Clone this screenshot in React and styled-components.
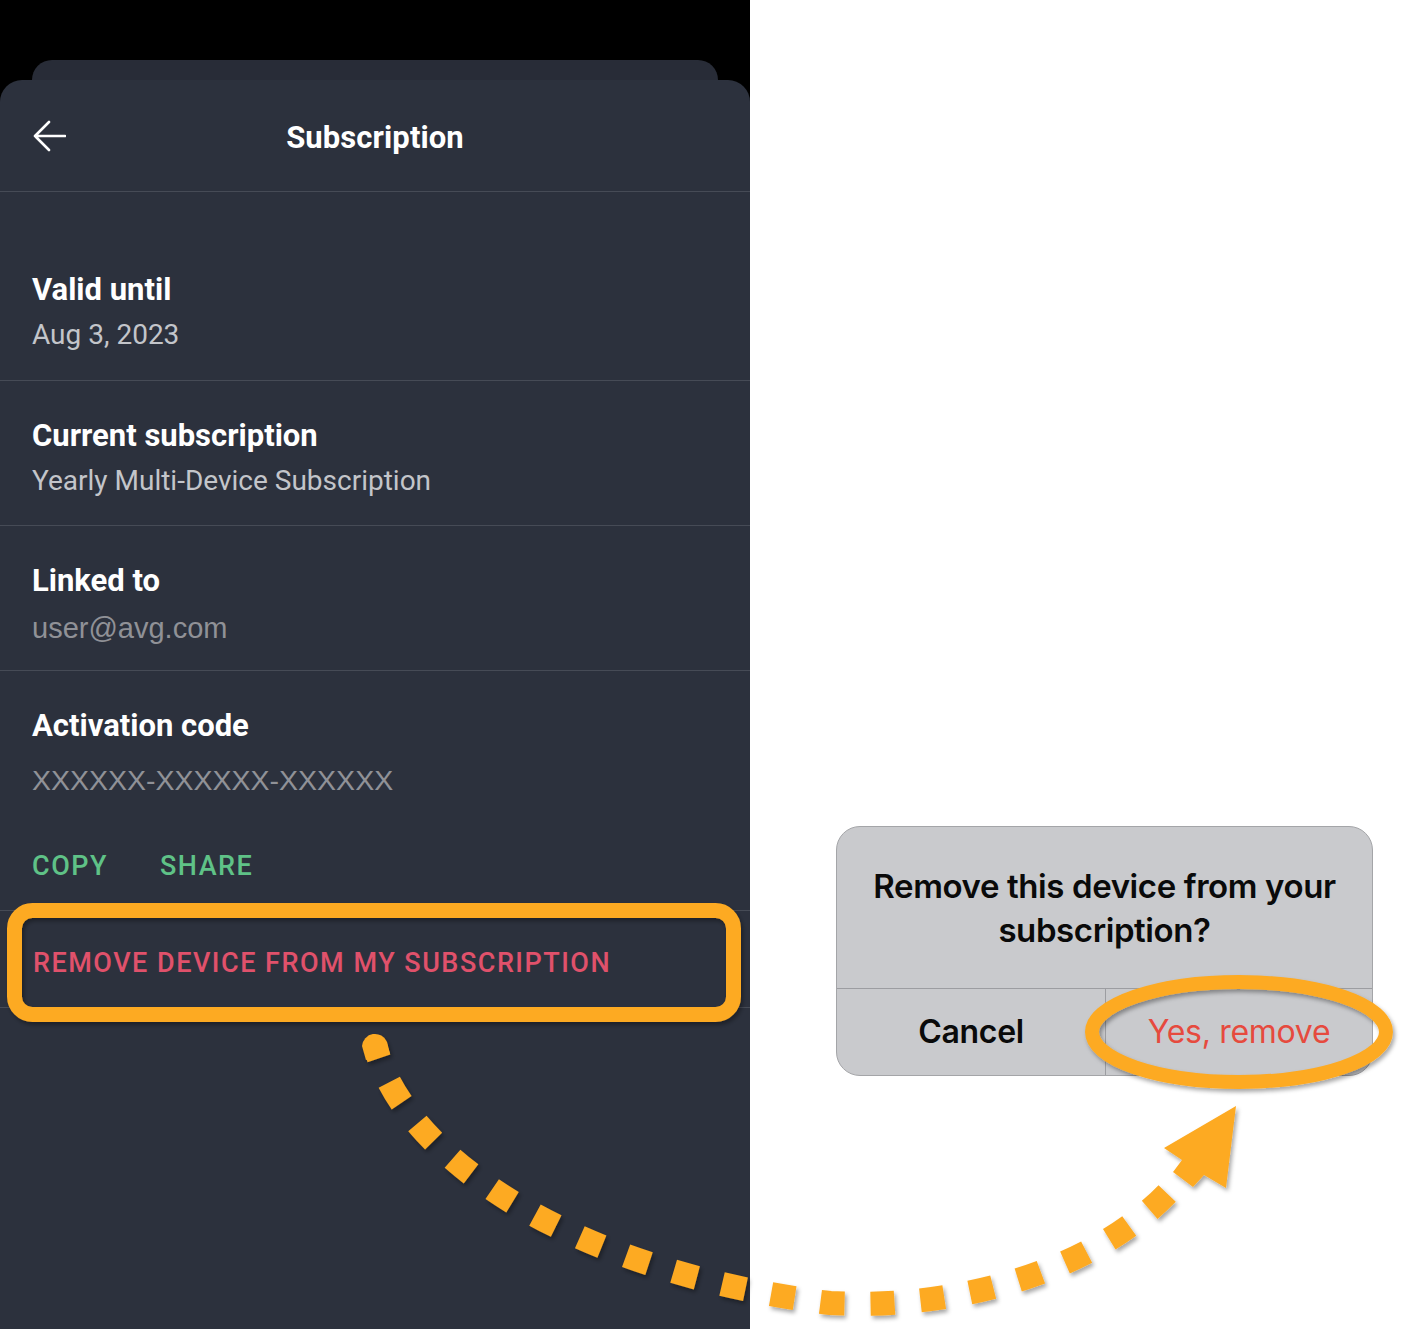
import React from "react";
import styled, { createGlobalStyle } from "styled-components";

const GlobalStyle = createGlobalStyle`
  html, body {
    margin: 0;
    padding: 0;
    background: #ffffff;
  }
  * {
    box-sizing: border-box;
  }
`;

const Page = styled.div`
  position: relative;
  width: 1403px;
  height: 1329px;
  display: flex;
  overflow: hidden;
  background: #ffffff;
  font-family: Roboto, "Noto Sans", sans-serif;
`;

const Phone = styled.div`
  width: 750px;
  display: flex;
  flex-direction: column;
  background: #000000;
  padding-top: 60px;
`;

const BackCard = styled.div`
  height: 20px;
  margin: 0 32px;
  background: #282c37;
  border-radius: 22px 22px 0 0;
`;

const Panel = styled.div`
  flex: 1;
  background: #2c313d;
  border-radius: 22px 22px 0 0;
  display: flex;
  flex-direction: column;
`;

const Header = styled.div`
  height: 112px;
  display: grid;
  grid-template-columns: 100px 1fr 100px;
  align-items: center;
  padding-left: 32px;
  border-bottom: 1px solid #464b56;
`;

const Title = styled.h1`
  margin: 0;
  text-align: center;
  color: #ffffff;
  font-size: 31px;
  font-weight: 700;
  padding-right: 32px;
  padding-top: 3px;
  letter-spacing: 0.1px;
`;

const Section = styled.div`
  padding: ${({ $top }) => $top || 37}px 32px ${({ $bottom }) => $bottom || 26}px;
  border-bottom: 1px solid #464b56;
  display: flex;
  flex-direction: column;
`;

const Label = styled.div`
  color: #ffffff;
  font-size: 31px;
  font-weight: 700;
  line-height: 36px;
`;

const Value = styled.div`
  margin-top: ${({ $gap }) => $gap || 9}px;
  color: ${({ $muted }) => ($muted ? "#909197" : "#c3c5ca")};
  font-family: ${({ $arial }) =>
    $arial ? '"Liberation Sans", Arial, sans-serif' : 'Roboto, sans-serif'};
  font-size: ${({ $size }) => $size || 28}px;
  line-height: 36px;
`;

const Actions = styled.div`
  margin-top: 50px;
  display: flex;
  gap: 52px;
`;

const ActionLink = styled.span`
  color: ${({ $danger }) => ($danger ? "#e0516b" : "#5fc287")};
  font-size: 27px;
  font-weight: 500;
  letter-spacing: 1.5px;
  line-height: 36px;
`;

const RemoveRow = styled.div`
  height: 97px;
  padding: 8px 33px 0;
  display: flex;
  align-items: center;
  border-bottom: 1px solid #464b56;
`;

const Side = styled.div`
  flex: 1;
  padding: 826px 0 0 86px;
`;

const Dialog = styled.div`
  width: 537px;
  height: 250px;
  background: #c9cacd;
  border: 1px solid #a4a5a8;
  border-radius: 24px;
  display: flex;
  flex-direction: column;
  overflow: hidden;
  font-family: Inter, "Noto Sans", sans-serif;
`;

const DialogText = styled.div`
  height: 162px;
  padding-top: 37px;
  text-align: center;
  color: #0a0a0a;
  font-size: 33px;
  font-weight: 600;
  line-height: 44px;
  letter-spacing: -0.4px;
  border-bottom: 1px solid #9c9da1;
`;

const DialogButtons = styled.div`
  flex: 1;
  display: grid;
  grid-template-columns: 268px 1fr;
`;

const DialogButton = styled.div`
  display: flex;
  align-items: center;
  justify-content: center;
  font-size: 32px;
  font-weight: ${({ $primary }) => ($primary ? 600 : 400)};
  color: ${({ $danger }) => ($danger ? "#e64a3e" : "#0a0a0a")};
  border-left: ${({ $divided }) => ($divided ? "1px solid #9c9da1" : "none")};
  letter-spacing: -0.3px;
  padding-bottom: 2px;
`;

const Overlay = styled.svg`
  position: absolute;
  left: 0;
  top: 0;
  pointer-events: none;
`;

const BackArrow = () => (
  <svg width="34" height="34" viewBox="0 0 34 34" fill="none">
    <path
      d="M33 17H3M17 3L3 17l14 14"
      stroke="#ffffff"
      strokeWidth="2.6"
      strokeLinecap="round"
      strokeLinejoin="round"
    />
  </svg>
);

const ORANGE = "#fdaa24";

const Annotations = () => (
  <Overlay width="1403" height="1329" viewBox="0 0 1403 1329">
    <defs>
      <filter id="shade" x="-10%" y="-10%" width="120%" height="120%">
        <feDropShadow dx="2" dy="3" stdDeviation="2.2" floodColor="#000" floodOpacity="0.35" />
      </filter>
    </defs>
    <g filter="url(#shade)">
      <rect x="14.5" y="910.5" width="719" height="104" rx="18" fill="none" stroke={ORANGE} strokeWidth="15" />
      <ellipse cx="1239" cy="1032" rx="147" ry="50" fill="none" stroke={ORANGE} strokeWidth="14" />
      <path
        d="M375 1045 C400 1150 560 1270 830 1303 C960 1310 1100 1270 1175 1185"
        fill="none"
        stroke={ORANGE}
        strokeWidth="24"
        strokeDasharray="24 26"
        strokeDashoffset="10"
      />
      <path d="M366 1060 L362 1046 A13 13 0 0 1 387 1042 L390 1054 Z" fill={ORANGE} />
      <polygon
        points="1236,1106 1164,1148 1182,1160 1173,1172 1193,1187 1204,1175 1226,1188"
        fill={ORANGE}
      />
    </g>
  </Overlay>
);

export default function App() {
  return (
    <>
      <GlobalStyle />
      <Page>
        <Phone>
          <BackCard />
          <Panel>
            <Header>
              <BackArrow />
              <Title>Subscription</Title>
              <span />
            </Header>
            <Section $top={80} $bottom={27}>
              <Label>Valid until</Label>
              <Value>Aug 3, 2023</Value>
            </Section>
            <Section>
              <Label>Current subscription</Label>
              <Value>Yearly Multi-Device Subscription</Value>
            </Section>
            <Section $bottom={24}>
              <Label>Linked to</Label>
              <Value $muted $arial $size={29} $gap={11}>user@avg.com</Value>
            </Section>
            <Section $bottom={26}>
              <Label>Activation code</Label>
              <Value $muted $arial $size={28.5} $gap={18}>XXXXXX-XXXXXX-XXXXXX</Value>
              <Actions>
                <ActionLink>COPY</ActionLink>
                <ActionLink>SHARE</ActionLink>
              </Actions>
            </Section>
            <RemoveRow>
              <ActionLink $danger>REMOVE DEVICE FROM MY SUBSCRIPTION</ActionLink>
            </RemoveRow>
          </Panel>
        </Phone>
        <Side>
          <Dialog>
            <DialogText>
              Remove this device from your
              <br />
              subscription?
            </DialogText>
            <DialogButtons>
              <DialogButton $primary>Cancel</DialogButton>
              <DialogButton $danger $divided>Yes, remove</DialogButton>
            </DialogButtons>
          </Dialog>
        </Side>
        <Annotations />
      </Page>
    </>
  );
}
